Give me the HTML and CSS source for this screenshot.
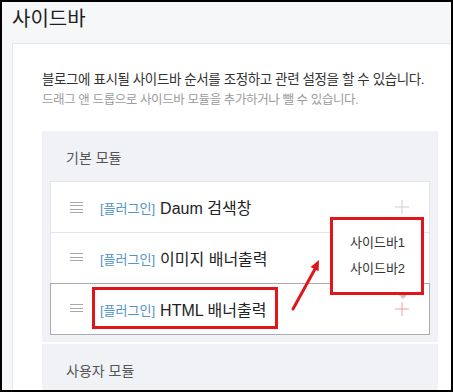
FILE: index.html
```html
<!DOCTYPE html>
<html lang="ko">
<head>
    <meta charset="UTF-8">
    <meta name="viewport" content="width=device-width, initial-scale=1.0">
    <title>사이드바</title>
    <link rel="stylesheet" href="styles.css">
</head>
<body>
    <div class="frame">
        <h1 class="page-title">사이드바</h1>

        <div class="panel">
            <p class="intro">블로그에 표시될 사이드바 순서를 조정하고 관련 설정을 할 수 있습니다.</p>
            <p class="intro-sub">드래그 앤 드롭으로 사이드바 모듈을 추가하거나 뺄 수 있습니다.</p>

            <div class="module-group">
                <h2 class="group-title">기본 모듈</h2>
                <ul class="module-list">
                    <li class="module-item">
                        <span class="drag-handle"></span>
                        <span class="tag">[플러그인]</span>
                        <span class="module-name">Daum 검색창</span>
                        <svg class="add-icon" width="14" height="14" viewBox="0 0 14 14">
                            <path d="M7 0v14M0 7h14" stroke="currentColor" stroke-width="1"/>
                        </svg>
                    </li>
                    <li class="module-item">
                        <span class="drag-handle"></span>
                        <span class="tag">[플러그인]</span>
                        <span class="module-name">이미지 배너출력</span>
                    </li>
                    <li class="module-item selected">
                        <span class="drag-handle"></span>
                        <span class="tag">[플러그인]</span>
                        <span class="module-name">HTML 배너출력</span>
                        <svg class="add-icon" width="14" height="14" viewBox="0 0 14 14">
                            <path d="M7 0v14M0 7h14" stroke="currentColor" stroke-width="1"/>
                        </svg>
                    </li>

                    <!-- annotation overlays -->
                    <li class="highlight-box"></li>
                    <li class="caret"></li>
                    <li class="sidebar-menu">
                        <div class="menu-option">사이드바1</div>
                        <div class="menu-option">사이드바2</div>
                    </li>
                    <li class="arrow">
                        <svg width="40" height="60" viewBox="0 0 40 60">
                            <path d="M8 54L30 14" stroke="#e0161b" stroke-width="3" stroke-linecap="round"/>
                            <path d="M34 5L33.6 16.3L25.6 12Z" fill="#e0161b"/>
                        </svg>
                    </li>
                </ul>
            </div>

            <div class="module-group user">
                <h2 class="group-title">사용자 모듈</h2>
            </div>
        </div>
    </div>
</body>
</html>
```

FILE: styles.css
```css
* {
    margin: 0;
    padding: 0;
    box-sizing: border-box;
}

body {
    font-family: "Liberation Sans", "Noto Sans CJK KR", sans-serif;
    color: #222;
}

.frame {
    width: 453px;
    height: 392px;
    border: 2px solid #000;
    background-color: #f6f7f9;
    overflow: hidden;
}

.page-title {
    font-size: 20px;
    font-weight: 400;
    line-height: 28px;
    padding: 3px 0 0 10px;
    margin-bottom: 10px;
    color: #1f1f1f;
}

.panel {
    margin-left: 10px;
    background: white;
    border-top: 1px solid #e6e7ea;
    border-left: 1px solid #e6e7ea;
    padding: 26px 13px 0 29px;
    height: 400px;
}

.intro {
    font-size: 13.5px;
    letter-spacing: -0.4px;
    line-height: 20px;
    color: #333;
    white-space: nowrap;
}

.intro-sub {
    font-size: 12.5px;
    letter-spacing: -0.4px;
    line-height: 20px;
    color: #9b9b9b;
    margin-bottom: 21px;
    white-space: nowrap;
}

.module-group {
    background-color: #f1f2f6;
    padding: 17px 8px 7px;
}

.module-group.user {
    margin-top: 2px;
    padding-top: 17px;
    height: 60px;
}

.group-title {
    font-size: 14px;
    font-weight: 400;
    line-height: 20px;
    color: #555;
    padding-left: 16px;
    margin-bottom: 13px;
}

.module-list {
    list-style: none;
    position: relative;
}

.module-item {
    display: flex;
    align-items: center;
    height: 52px;
    background: white;
    border: 1px solid #e4e5e9;
    padding: 0 19px 0 19px;
}

.module-item + .module-item {
    margin-top: -1px;
}

.module-item.selected {
    border-color: #a9abb0;
}

.drag-handle {
    width: 13px;
    height: 11px;
    margin-right: 17px;
    background: repeating-linear-gradient(to bottom, #a8a8a8 0, #a8a8a8 1px, transparent 1px, transparent 3.5px);
}

.tag {
    font-size: 13px;
    color: #4f93c8;
    margin-right: 5px;
}

.module-name {
    font-size: 16px;
    color: #222;
}

.add-icon {
    margin-left: auto;
    margin-right: 1px;
    color: #cfcfcf;
}

.selected .add-icon {
    color: #eaa3a3;
}

.highlight-box {
    position: absolute;
    left: 42px;
    top: 106px;
    width: 186px;
    height: 42px;
    border: 3px solid #e0161b;
}

.caret {
    position: absolute;
    left: 349px;
    top: 114px;
    width: 0;
    height: 0;
    border-left: 4px solid transparent;
    border-right: 4px solid transparent;
    border-top: 4px solid #c4c4c4;
}

.sidebar-menu {
    position: absolute;
    left: 280px;
    top: 36px;
    width: 94px;
    height: 78px;
    border: 3px solid #e0161b;
    background: white;
    padding: 10px 0 0 17px;
}

.menu-option {
    font-size: 13px;
    line-height: 26px;
    color: #333;
}

.arrow {
    position: absolute;
    left: 235px;
    top: 74px;
    width: 40px;
    height: 60px;
}
```
